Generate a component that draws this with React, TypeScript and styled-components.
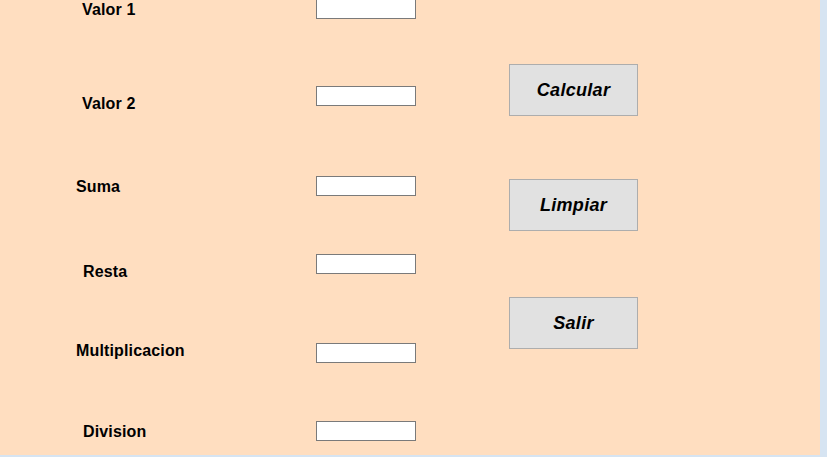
import React from "react";
import styled, { createGlobalStyle } from "styled-components";

const Global = createGlobalStyle`
  html, body {
    margin: 0;
    padding: 0;
    background: #d6e4f2;
    overflow: hidden;
  }
  #root { width: 827px; height: 457px; }
`;

const Form = styled.div`
  width: 820px;
  height: 455px;
  background: #ffdec0;
  display: flex;
  font-family: "Liberation Sans", Arial, sans-serif;
  color: #000;
  overflow: hidden;
`;

const Fields = styled.div`
  width: 509px;
  display: flex;
  flex-direction: column;
`;

const Row = styled.div<{ $h: number }>`
  height: ${(p) => p.$h}px;
  display: flex;
  align-items: flex-start;
`;

const Label = styled.label<{ $left: number; $top: number }>`
  flex: 0 0 316px;
  box-sizing: border-box;
  padding-left: ${(p) => p.$left}px;
  padding-top: ${(p) => p.$top}px;
  font-size: 16px;
  line-height: 18px;
  font-weight: bold;
  letter-spacing: 0.15px;
`;

const Field = styled.input<{ $top: number }>`
  margin: ${(p) => p.$top}px 0 0 0;
  width: 100px;
  height: 20px;
  box-sizing: border-box;
  border: 1px solid #7a7a7a;
  background: #fff;
  padding: 0 2px;
  outline: none;
  font-family: inherit;
  font-size: 13px;
`;

const Buttons = styled.div`
  display: flex;
  flex-direction: column;
`;

const Button = styled.button<{ $top: number }>`
  margin-top: ${(p) => p.$top}px;
  width: 129px;
  height: 52px;
  box-sizing: border-box;
  border: 1px solid #adadad;
  background: #e1e1e1;
  font-family: "Liberation Sans", Arial, sans-serif;
  font-size: 18px;
  font-weight: bold;
  font-style: italic;
  letter-spacing: 0.3px;
  color: #000;
  padding: 0;
  cursor: pointer;
`;

const rows = [
  { label: "Valor 1", h: 80, left: 82, lt: 1, it: -1 },
  { label: "Valor 2", h: 90, left: 82, lt: 15, it: 6 },
  { label: "Suma", h: 78, left: 76, lt: 8, it: 6 },
  { label: "Resta", h: 90, left: 83, lt: 15, it: 6 },
  { label: "Multiplicacion", h: 77, left: 76, lt: 4, it: 5 },
  { label: "Division", h: 40, left: 83, lt: 8, it: 6 },
];

const buttons = [
  { text: "Calcular", top: 64 },
  { text: "Limpiar", top: 63 },
  { text: "Salir", top: 66 },
];

export default function App() {
  return (
    <>
      <Global />
      <Form>
        <Fields>
          {rows.map((r) => (
            <Row key={r.label} $h={r.h}>
              <Label $left={r.left} $top={r.lt}>
                {r.label}
              </Label>
              <Field $top={r.it} type="text" />
            </Row>
          ))}
        </Fields>
        <Buttons>
          {buttons.map((b) => (
            <Button key={b.text} $top={b.top}>
              {b.text}
            </Button>
          ))}
        </Buttons>
      </Form>
    </>
  );
}
